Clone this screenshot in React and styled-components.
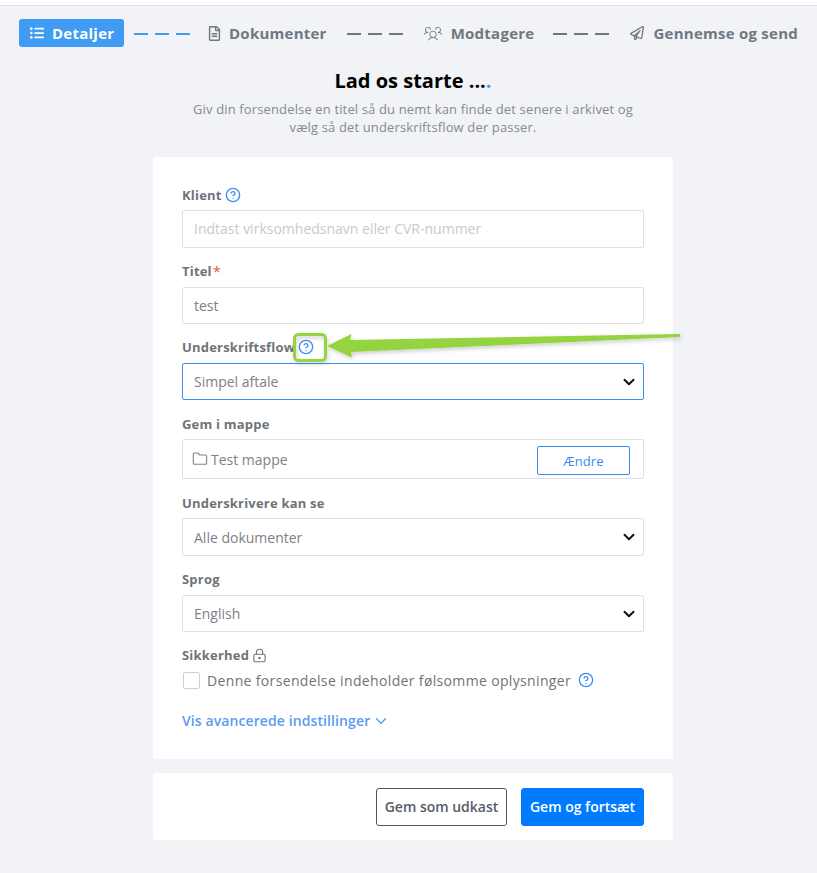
import React from "react";
import styled, { createGlobalStyle } from "styled-components";
import { CircleHelp, Folder, ChevronDown, LockKeyhole } from "lucide-react";
import { FaListUl, FaRegFileAlt, FaRegPaperPlane } from "react-icons/fa";
import { PiUsersThreeLight } from "react-icons/pi";

const Global = createGlobalStyle`
  html, body { margin: 0; padding: 0; background: #f1f3f7; }
  body { font-family: "Open Sans", "Liberation Sans", sans-serif; }
  * { box-sizing: border-box; }
`;

const Page = styled.div`
  position: relative;
  width: 817px;
  height: 873px;
  overflow: hidden;
  background: #f1f3f7;
`;
const TopStrip = styled.div`
  height: 6px;
  background: #fff;
  border-bottom: 1px solid #dfe1e6;
`;
const Stepper = styled.nav`
  display: flex;
  align-items: center;
  height: 28px;
  margin: 13px 0 0 19px;
  white-space: nowrap;
`;
const Step = styled.div`
  display: flex;
  align-items: center;
  gap: ${(p) => p.$gap}px;
  height: 28px;
  min-width: ${(p) => (p.$active ? "105px" : "0")};
  padding: ${(p) => (p.$active ? "0 9px 0 11px" : "0")};
  border-radius: 3px;
  background: ${(p) => (p.$active ? "#3f9bf4" : "transparent")};
  color: ${(p) => (p.$active ? "#fff" : "#6f7780")};
  font-size: 15px;
  font-weight: 700;
  letter-spacing: 0.25px;
`;
const Dashes = styled.div`
  display: flex;
  gap: 7px;
  margin: 2px ${(p) => p.$right}px 0 ${(p) => p.$left}px;
  & > i {
    display: block;
    width: 14px;
    height: 2px;
    background: ${(p) => (p.$active ? "#3f9bf4" : "#6f7780")};
  }
`;
const Intro = styled.header`
  width: 520px;
  margin: 20px 0 0 153px;
  text-align: center;
`;
const Heading = styled.h1`
  margin: 0;
  height: 28px;
  font-size: 20px;
  line-height: 28px;
  font-weight: 700;
  color: #000;
`;
const Dot = styled.span`
  color: #3f9bf4;
`;
const Lead = styled.p`
  margin: 5px 0 0;
  font-size: 13px;
  line-height: 18px;
  letter-spacing: 0.14px;
  color: #858a92;
`;
const Card = styled.section`
  width: 520px;
  margin: 0 0 0 153px;
  background: #fff;
  border-radius: 3px;
`;
const FormCard = styled(Card)`
  margin-top: 21px;
  height: 602px;
  padding: 29px 29px 0;
`;
const Field = styled.div`
  height: ${(p) => p.$h}px;
`;
const Label = styled.label`
  display: flex;
  align-items: center;
  gap: 3px;
  height: 18px;
  margin-bottom: ${(p) => p.$gap || 6}px;
  font-size: 13px;
  line-height: 18px;
  font-weight: 700;
  color: #6f7378;
  letter-spacing: 0.2px;
`;
const Star = styled.span`
  color: #e8613f;
  font-size: 15px;
  font-weight: 400;
  margin-left: -2px;
`;
const Help = styled(CircleHelp)`
  color: #3f8ff0;
  flex: none;
`;
const Control = styled.div`
  display: flex;
  align-items: center;
  justify-content: space-between;
  width: 462px;
  height: ${(p) => p.$h || 38}px;
  padding: 0 ${(p) => (p.$select ? 5 : 11)}px ${(p) => (p.$muted ? 2 : 0)}px 11px;
  border: 1px solid ${(p) => (p.$focus ? "#3f8ff0" : "#e0e0e0")};
  border-radius: 2px;
  background: #fff;
  font-size: 14px;
  color: ${(p) => (p.$muted ? "#c9c9c9" : "#7d8186")};
`;
const Caret = styled(ChevronDown)`
  color: #111;
  flex: none;
`;
const FolderValue = styled.div`
  display: flex;
  align-items: center;
  gap: 3px;
  margin-left: -2px;
`;
const ChangeButton = styled.button`
  width: 93px;
  height: 29px;
  margin: 3px 8px 0 0;
  border: 1px solid #3a8bf0;
  border-radius: 2px;
  background: #fff;
  color: #3a8bf0;
  font: 400 13px "Open Sans", sans-serif;
  letter-spacing: 0.1px;
`;
const CheckRow = styled.div`
  display: flex;
  align-items: center;
  height: 18px;
  margin-top: 7px;
  padding-left: 1px;
  font-size: 14px;
  color: #6f7378;
  letter-spacing: 0.35px;
`;
const Box = styled.span`
  width: 17px;
  height: 17px;
  margin-right: 7px;
  border: 1px solid #cfcfcf;
  border-radius: 2px;
`;
const HelpSlot = styled.span`
  display: flex;
  margin-left: 7px;
`;
const Advanced = styled.a`
  display: flex;
  align-items: center;
  gap: 2px;
  margin-top: 22px;
  font-size: 14px;
  line-height: 20px;
  font-weight: 600;
  letter-spacing: 0.1px;
  color: #5b9bf0;
`;
const Footer = styled(Card)`
  display: flex;
  justify-content: flex-end;
  align-items: center;
  gap: 14px;
  height: 67px;
  margin-top: 14px;
  padding: 0 29px 0 0;
`;
const Button = styled.button`
  height: 38px;
  width: ${(p) => p.$w}px;
  padding: 0;
  border-radius: 3px;
  border: 1px solid ${(p) => (p.$primary ? "#007bff" : "#4d5561")};
  background: ${(p) => (p.$primary ? "#007bff" : "#fff")};
  color: ${(p) => (p.$primary ? "#fff" : "#555c68")};
  font: 600 14px "Open Sans", sans-serif;
`;
const Annotation = styled.svg`
  position: absolute;
  left: 0;
  top: 0;
  width: 817px;
  height: 873px;
  pointer-events: none;
`;

const Dash = (props) => (
  <Dashes {...props}>
    <i />
    <i />
    <i />
  </Dashes>
);

export default function App() {
  return (
    <>
      <Global />
      <Page>
        <TopStrip />
        <Stepper>
          <Step $active $gap={8}>
            <FaListUl size={14} />
            Detaljer
          </Step>
          <Dash $active $left={10} $right={17} />
          <Step $gap={7}>
            <FaRegFileAlt size={15} />
            Dokumenter
          </Step>
          <Dash $left={20} $right={20} />
          <Step $gap={8}>
            <PiUsersThreeLight size={20} />
            Modtagere
          </Step>
          <Dash $left={19} $right={21} />
          <Step $gap={9}>
            <FaRegPaperPlane size={14} />
            Gennemse og send
          </Step>
        </Stepper>
        <Intro>
          <Heading>
            Lad os starte ...<Dot>.</Dot>
          </Heading>
          <Lead>
            Giv din forsendelse en titel så du nemt kan finde det senere i arkivet og
            <br />
            vælg så det underskriftsflow der passer.
          </Lead>
        </Intro>
        <FormCard>
          <Field $h={76}>
            <Label>
              Klient <Help size={16} strokeWidth={2} />
            </Label>
            <Control $muted>Indtast virksomhedsnavn eller CVR-nummer</Control>
          </Field>
          <Field $h={76}>
            <Label $gap={7}>
              Titel<Star>*</Star>
            </Label>
            <Control $h={37}>test</Control>
          </Field>
          <Field $h={77}>
            <Label $gap={7}>
              Underskriftsflow <Help size={16} strokeWidth={2} />
            </Label>
            <Control $h={37} $focus $select>
              Simpel aftale
              <Caret size={18} strokeWidth={2.6} />
            </Control>
          </Field>
          <Field $h={79}>
            <Label>Gem i mappe</Label>
            <Control $h={40} $select>
              <FolderValue>
                <Folder size={16} strokeWidth={1.6} />
                Test mappe
              </FolderValue>
              <ChangeButton>Ændre</ChangeButton>
            </Control>
          </Field>
          <Field $h={76}>
            <Label>Underskrivere kan se</Label>
            <Control $select>
              Alle dokumenter
              <Caret size={18} strokeWidth={2.6} />
            </Control>
          </Field>
          <Field $h={76}>
            <Label $gap={7}>Sprog</Label>
            <Control $h={37} $select>
              English
              <Caret size={18} strokeWidth={2.6} />
            </Control>
          </Field>
          <Label>
            Sikkerhed <LockKeyhole size={15} strokeWidth={1.8} />
          </Label>
          <CheckRow>
            <Box />
            Denne forsendelse indeholder følsomme oplysninger
            <HelpSlot>
              <Help size={16} strokeWidth={2} />
            </HelpSlot>
          </CheckRow>
          <Advanced>
            Vis avancerede indstillinger <ChevronDown size={18} strokeWidth={1.8} />
          </Advanced>
        </FormCard>
        <Footer>
          <Button $w={131}>Gem som udkast</Button>
          <Button $w={123} $primary>
            Gem og fortsæt
          </Button>
        </Footer>
        <Annotation viewBox="0 0 817 873">
          <defs>
            <filter id="s" x="-10%" y="-30%" width="120%" height="180%">
              <feDropShadow dx="1" dy="2" stdDeviation="2" floodColor="#000" floodOpacity="0.2" />
            </filter>
          </defs>
          <g filter="url(#s)">
            <rect x="294.5" y="334.5" width="31" height="26" rx="4" fill="none" stroke="#93d43f" strokeWidth="3" />
            <path d="M327 346 L351.5 334 L350 340 L680 334 L680 337 L351 352 L352 357.5 Z" fill="#93d43f" />
          </g>
        </Annotation>
      </Page>
    </>
  );
}
